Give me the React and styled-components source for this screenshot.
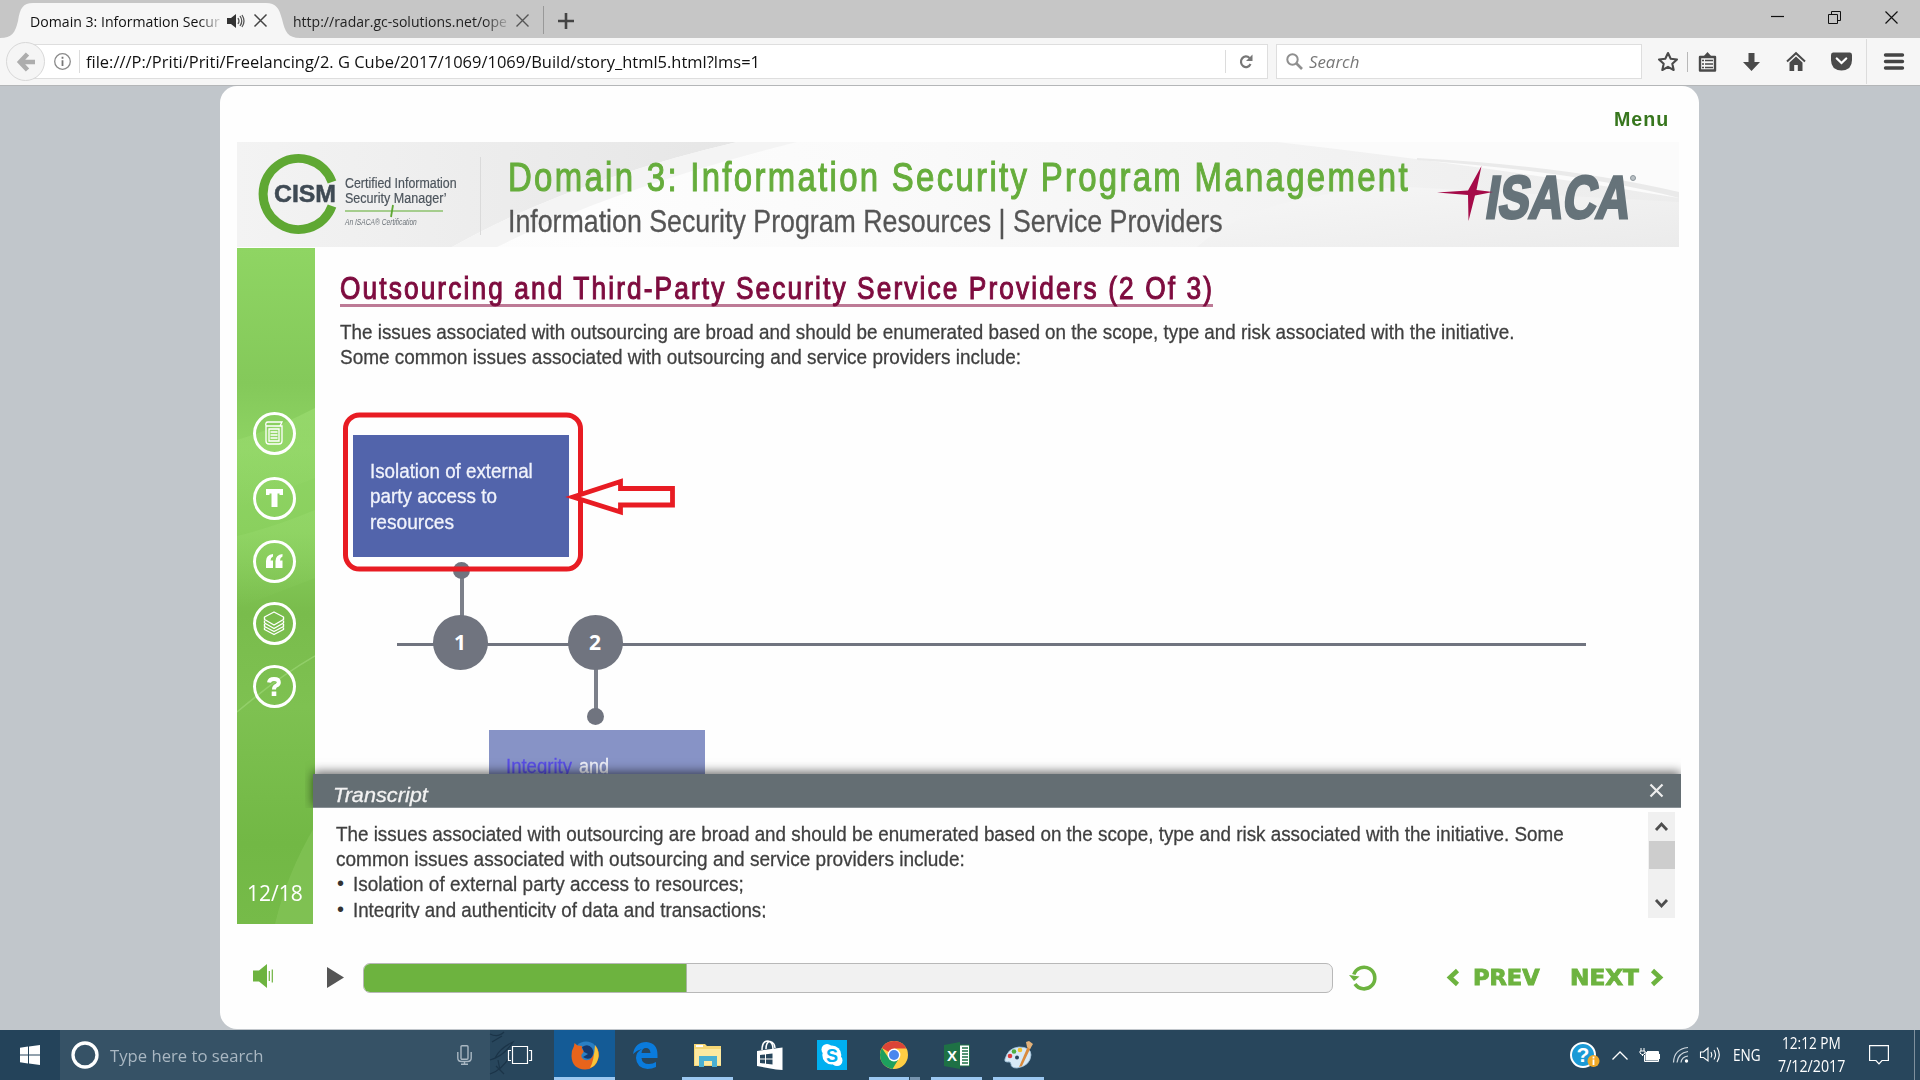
import React, { useLayoutEffect, useRef, useState } from "react";
import styled, { createGlobalStyle, css } from "styled-components";

const NARROW = '"Liberation Sans Narrow", "Liberation Sans", Arial, sans-serif';
const UI = '"Open Sans", "Noto Sans", sans-serif';
const GREEN = "#6db33f";

const GlobalStyle = createGlobalStyle`
  * { box-sizing: border-box; }
  html, body { margin: 0; padding: 0; }
  body { width: 1920px; height: 1080px; overflow: hidden; background: #c1c6cb; font-family: ${UI}; }
  svg { display: block; flex: none; overflow: visible; }
`;

/* ---------- text that is condensed or stretched to a set width ---------- */
const FitBox = styled.span`
  display: block;
  flex: none;
  width: ${(p) => p.$w}px;
  height: ${(p) => p.$lh}px;
  line-height: ${(p) => p.$lh}px;
  font-family: ${(p) => p.$font || NARROW};
  font-size: ${(p) => p.$size}px;
  font-weight: ${(p) => p.$weight || 400};
  font-style: ${(p) => (p.$italic ? "italic" : "normal")};
  letter-spacing: ${(p) => p.$track || 0}em;
  color: ${(p) => p.$color || "#444"};
  white-space: pre;
  ${(p) => p.$stroke && css`-webkit-text-stroke: ${p.$stroke}px ${p.$color};`}
`;
const FitInner = styled.span`
  display: inline-block;
  transform-origin: 0 50%;
`;
function Fit({ w, size, lh, font, weight, italic, track, color, stroke, className, children }) {
  const ref = useRef(null);
  const [scale, setScale] = useState(1);
  useLayoutEffect(() => {
    if (ref.current) setScale(w / ref.current.offsetWidth);
  }, [w, children]);
  return (
    <FitBox className={className} $w={w} $size={size} $lh={lh} $font={font} $weight={weight}
      $italic={italic} $track={track} $color={color} $stroke={stroke}>
      <FitInner ref={ref} style={{ transform: `scaleX(${scale})` }}>{children}</FitInner>
    </FitBox>
  );
}

const Screen = styled.div`
  width: 1920px;
  height: 1080px;
  display: flex;
  flex-direction: column;
  background: #c1c6cb;
  overflow: hidden;
`;

/* ---------- browser ---------- */
const TabStrip = styled.div`
  height: 38px;
  flex: none;
  display: flex;
  align-items: flex-end;
  background: #c6c6c6;
`;
const ActiveTab = styled.div`
  width: 300px;
  height: 35px;
  padding: 0 33px 0 30px;
  display: flex;
  align-items: center;
  background: #f6f6f6;
  clip-path: path("M0 35 C12 35 15 30 18 18 C20 5 23 0 33 0 H266 C276 0 279 5 282 16 C285 29 288 35 300 35 Z");
`;
const OtherTab = styled.div`
  width: 243px;
  height: 35px;
  margin-left: -7px;
  display: flex;
  align-items: center;
`;
const TabTitle = styled.div`
  width: ${(p) => p.$w}px;
  overflow: hidden;
  margin-right: ${(p) => p.$gap}px;
  mask-image: linear-gradient(to right, #000 89%, rgba(0, 0, 0, 0.15) 100%);
`;
const TabGap = styled.div`width: ${(p) => p.$w}px; flex: none;`;
const TabDivider = styled.div`
  width: 1px;
  height: 28px;
  margin: 0 14px 4px 7px;
  background: #999;
`;
const NewTab = styled.div`height: 35px; display: flex; align-items: center; flex: 1;`;
const WindowButtons = styled.div`
  height: 38px;
  display: flex;
  align-items: center;
  gap: 44px;
  padding: 0 22px 4px 0;
`;

const Toolbar = styled.div`
  height: 48px;
  flex: none;
  display: flex;
  align-items: center;
  padding-left: 6px;
  background: #f6f6f6;
  border-bottom: 1px solid #b4b6b8;
`;
const BackButton = styled.div`
  width: 39px;
  height: 39px;
  flex: none;
  display: flex;
  align-items: center;
  justify-content: center;
  border-radius: 50%;
  border: 1px solid #d8d8d8;
  background: #f5f5f5;
  z-index: 1;
`;
const UrlBar = styled.div`
  width: 1237px;
  height: 35px;
  margin-left: -14px;
  padding-left: 22px;
  display: flex;
  align-items: center;
  background: #fff;
  border: 1px solid #dedede;
`;
const UrlText = styled.div`flex: 1; padding-left: 6px;`;
const VLine = styled.div`
  width: 1px;
  height: ${(p) => p.$h}px;
  background: ${(p) => p.$c || "#dcdcdc"};
  margin: ${(p) => p.$m || 0};
`;
const ReloadSlot = styled.div`width: 41px; display: flex; justify-content: center; padding-right: 2px;`;
const SearchBar = styled.div`
  width: 366px;
  height: 35px;
  margin-left: 8px;
  padding-left: 9px;
  display: flex;
  align-items: center;
  gap: 6px;
  background: #fff;
  border: 1px solid #dedede;
`;
const ToolIcons = styled.div`
  display: flex;
  align-items: center;
  padding-left: 15px;
`;

/* ---------- course player ---------- */
const PageArea = styled.div`
  height: 944px;
  flex: none;
  padding-left: 220px;
`;
const Player = styled.div`
  width: 1479px;
  height: 943px;
  border-radius: 17px;
  background: #fefefe;
  display: flex;
  flex-direction: column;
`;
const MenuRow = styled.div`
  height: 56px;
  display: flex;
  justify-content: flex-end;
  padding: 19px 30px 0 0;
`;
const Banner = styled.header`
  position: relative;
  width: 1442px;
  height: 105px;
  margin-left: 17px;
  display: flex;
  flex: none;
  background: #f0f0f0;
`;
const BannerArt = styled.svg`
  position: absolute;
  inset: 0;
`;
const LogoBlock = styled.div`
  position: relative;
  display: flex;
  width: 243px;
  height: 105px;
`;
const Ring = styled.svg`
  position: absolute;
  left: 21px;
  top: 12px;
`;
const LogoWord = styled.div`padding: 38px 0 0 37px;`;
const LogoLines = styled.div`
  padding: 32.5px 0 0 9px;
  display: flex;
  flex-direction: column;
`;
const BannerRule = styled.div`
  position: relative;
  width: 1px;
  height: 78px;
  margin-top: 15px;
  background: #dadada;
`;
const Titles = styled.div`
  position: relative;
  padding: 10px 0 0 27px;
  width: 952px;
`;
const IsacaLogo = styled.svg`position: relative;`;

const Main = styled.div`
  margin: 1px 0 0 17px;
  height: 676px;
  flex: none;
  display: flex;
`;
const Sidebar = styled.nav`
  position: relative;
  width: 78px;
  height: 676px;
  display: flex;
  flex-direction: column;
  align-items: center;
  overflow: hidden;
`;
const SidebarArt = styled.svg`
  position: absolute;
  inset: 0;
`;
const SideButton = styled.div`
  position: relative;
  width: 43px;
  height: 43px;
  flex: none;
  margin: ${(p) => p.$mt}px 4px 0 0;
  display: flex;
  align-items: center;
  justify-content: center;
  border-radius: 50%;
  border: 3px solid #fff;
`;
const PageCount = styled.div`
  position: relative;
  margin: auto 0 16px -2px;
`;
const Stage = styled.section`
  width: 1366px;
  display: flex;
  flex-direction: column;
`;
const Slide = styled.div`
  height: 526px;
  display: flex;
  flex-direction: column;
  overflow: hidden;
  padding: 21px 0 0 0;
`;
const Heading = styled.h1`
  margin: 0 0 11.5px 25px;
  width: 873px;
  height: 38px;
  border-bottom: 3px solid #bd7a96;
`;
const Copy = styled.div`padding-left: 25px;`;
const Timeline = styled.div`
  position: relative;
  flex: 1;
`;
const Annotation = styled.svg`
  position: absolute;
  left: 0;
  top: 0;
`;
const Axis = styled.div`
  position: absolute;
  left: 82px;
  top: 274px;
  width: 1189px;
  height: 3px;
  background: #70747f;
`;
const Stem = styled.div`
  position: absolute;
  left: ${(p) => p.$x}px;
  top: ${(p) => p.$y}px;
  width: 4px;
  height: 44px;
  background: #7c808a;
`;
const Dot = styled.div`
  position: absolute;
  left: ${(p) => p.$x}px;
  top: ${(p) => p.$y}px;
  width: 17px;
  height: 17px;
  border-radius: 50%;
  background: #70747f;
`;
const Step = styled.div`
  position: absolute;
  left: ${(p) => p.$x}px;
  top: 246px;
  width: 55px;
  height: 55px;
  border-radius: 50%;
  background: #70747f;
  color: #fff;
  font: 700 21px/54px ${UI};
  text-align: center;
`;
const Card = styled.div`
  position: absolute;
  left: ${(p) => p.$x}px;
  top: ${(p) => p.$y}px;
  width: 216px;
  height: 122px;
  padding: 22.5px 17px;
  background: ${(p) => p.$bg};
`;
const CardLine = styled.div`display: flex; gap: 7px;`;

const TranscriptBar = styled.div`
  position: relative;
  height: 34px;
  flex: none;
  margin-left: -2px;
  width: 1368px;
  display: flex;
  justify-content: space-between;
  padding: 4px 18px 0 20px;
  background: #646e73;
  box-shadow: 0 -2px 10px rgba(0, 0, 0, 0.6);
  border-bottom: 1px solid #899196;
  clip-path: inset(-16px 0 0 -8px);
`;
const CloseSlot = styled.div`padding-top: 6px;`;
const TranscriptBody = styled.div`
  position: relative;
  width: 1368px;
  margin-left: -2px;
  height: 116px;
  display: flex;
  background: #fefefe;
`;
const TranscriptText = styled.div`
  height: 109.5px;
  width: 1335px;
  padding: 12.5px 0 0 23px;
  overflow: hidden;
`;
const Bullet = styled.div`display: flex; padding-left: 1px;`;
const BulletMark = styled.span`
  width: 16px;
  font: 20px/25.4px "Liberation Sans", sans-serif;
  color: #333;
`;
const Scrollbar = styled.div`
  width: 27px;
  height: 106px;
  margin-top: 4px;
  background: #f0f0f0;
  display: flex;
  flex-direction: column;
  align-items: center;
`;
const ScrollEnd = styled.div`
  height: 29px;
  display: flex;
  align-items: center;
`;
const Thumb = styled.div`
  width: 26px;
  height: 28px;
  margin-bottom: 20px;
  background: #cdcdcd;
`;

const Controls = styled.footer`
  height: 105px;
  padding: 2px 0 0 33px;
  display: flex;
  align-items: center;
`;
const VolumeSlot = styled.div`padding-bottom: 3px; margin-right: 54px;`;
const Progress = styled.div`
  width: 970px;
  height: 30px;
  margin: 0 17px 0 19px;
  border-radius: 7px;
  border: 1.5px solid #b8b8b8;
  background: #f1f1f1;
  overflow: hidden;
`;
const ProgressFill = styled.div`
  height: 100%;
  border-right: 1px solid #a9b5a2;
  background: ${GREEN};
`;
const NavButton = styled.div`
  display: flex;
  align-items: center;
  gap: ${(p) => p.$gap}px;
  margin-left: ${(p) => p.$ml}px;
`;

/* ---------- taskbar ---------- */
const Taskbar = styled.div`
  height: 50px;
  flex: none;
  display: flex;
  background: #28465c;
`;
const StartButton = styled.div`
  width: 60px;
  display: flex;
  align-items: center;
  justify-content: center;
  background: #24435a;
`;
const SearchBox = styled.div`
  width: 430px;
  padding: 0 18px 0 11px;
  display: flex;
  align-items: center;
  background: #365266;
`;
const SearchLabel = styled.div`flex: 1; padding-left: 11px; padding-top: 1px;`;
const TaskView = styled.div`
  width: 64px;
  display: flex;
  align-items: center;
`;
const AppButton = styled.div`
  width: ${(p) => p.$w}px;
  margin-left: ${(p) => p.$ml || 0}px;
  padding-left: ${(p) => p.$shift || 0}px;
  height: 50px;
  display: flex;
  align-items: center;
  justify-content: center;
  background: ${(p) => (p.$active ? "#145b96" : "transparent")};
  border-top: 3px solid transparent;
  border-bottom: 3px solid ${(p) => (p.$open ? "#9cc8f1" : "transparent")};
`;
const Half = styled.div`width: 10px; height: 3px; margin: 47px 0 0 1px; background: #7694ae;`;
const Tray = styled.div`
  margin-left: auto;
  display: flex;
  align-items: center;
`;
const Clock = styled.div`
  width: 68px;
  margin: 0 24px 0 16px;
  display: flex;
  flex-direction: column;
  align-items: center;
`;
const ShowDesktop = styled.div`
  width: 6px;
  height: 50px;
  margin-left: 25px;
  border-left: 1px solid #7f909d;
`;

const Cross = ({ s, c, w }) => (
  <svg width={s} height={s} viewBox="0 0 13 13"><path d="M.5 .5 12.5 12.5M12.5 .5 .5 12.5" stroke={c} strokeWidth={w} fill="none" /></svg>
);

function Browser() {
  return (
    <>
      <TabStrip>
        <ActiveTab>
          <TabTitle $w={190} $gap={7}><Fit w={190} size={15} lh={24} font={UI} color="#111">Domain 3: Information Secur</Fit></TabTitle>
          <svg width="18" height="14" viewBox="0 0 18 14"><path d="M0 4H4L9 0V14L4 10H0Z" fill="#333" /><path d="M11 4Q13 7 11 10M13 2Q16.500 7 13 12M15 1Q19 7 15 13" stroke="#555" strokeWidth="1.3" fill="none" /></svg>
          <TabGap $w={9} />
          <Cross s={13} c="#444" w={1.5} />
        </ActiveTab>
        <OtherTab>
          <TabTitle $w={215} $gap={8}><Fit w={214} size={15} lh={24} font={UI} color="#222">http://radar.gc-solutions.net/ope</Fit></TabTitle>
          <Cross s={13} c="#555" w={1.4} />
        </OtherTab>
        <TabDivider />
        <NewTab><svg width="16" height="16"><path d="M8 0V16M0 8H16" stroke="#444" strokeWidth="2.600" /></svg></NewTab>
        <WindowButtons>
          <svg width="13" height="13"><path d="M0 5.500H13" stroke="#111" strokeWidth="1.2" /></svg>
          <svg width="13" height="13"><path d="M.5 3.500H9.500V12.500H.5ZM3.500 3.500V.5H12.500V9.500H9.500" fill="none" stroke="#111" /></svg>
          <Cross s={13} c="#111" w={1.2} />
        </WindowButtons>
      </TabStrip>
      <Toolbar>
        <BackButton>
          <svg width="18" height="20" viewBox="0 0 18 20"><path d="M10.500 2 3 10 10.500 18M3.500 10H18" fill="none" stroke="#adadad" strokeWidth="4.600" /></svg>
        </BackButton>
        <UrlBar>
          <svg width="17" height="17"><circle cx="8.500" cy="8.500" r="7.800" fill="none" stroke="#8a8a8a" strokeWidth="1.300" /><path d="M8.500 7.200V13M8.500 3.800V5.800" stroke="#777" strokeWidth="1.800" /></svg>
          <VLine $h={23} $m="0 0 0 8px" />
          <UrlText><Fit w={674} size={16.5} lh={30} font={UI} color="#111">file:///P:/Priti/Priti/Freelancing/2. G Cube/2017/1069/1069/Build/story_html5.html?lms=1</Fit></UrlText>
          <VLine $h={23} />
          <ReloadSlot>
            <svg width="14" height="15" viewBox="0 0 14 15"><path d="M10.500 4A5 5.300 0 1 0 11.500 10" fill="none" stroke="#777" strokeWidth="2.200" /><path d="M13.500 .5V7H7Z" fill="#777" /></svg>
          </ReloadSlot>
        </UrlBar>
        <SearchBar>
          <svg width="17" height="17"><circle cx="6.500" cy="6.500" r="5.200" fill="none" stroke="#8f8f8f" strokeWidth="2" /><path d="M10.500 10.500 16 16" stroke="#8f8f8f" strokeWidth="2.600" /></svg>
          <Fit w={50} size={16.5} lh={30} font={UI} italic color="#777">Search</Fit>
        </SearchBar>
        <ToolIcons>
          <svg width="22" height="21" viewBox="0 0 22 21"><path d="M11 2 13.700 7.800 20 8.500 15.300 12.800 16.700 19 11 15.800 5.300 19 6.700 12.800 2 8.500 8.300 7.800Z" fill="none" stroke="#4a4a4a" strokeWidth="2.100" strokeLinejoin="round" /></svg>
          <VLine $h={20} $c="#b8b8b8" $m="0 10px 0 8px" />
          <svg width="19" height="20" viewBox="0 0 19 20"><path d="M2 5H17V18.500H2Z" fill="none" stroke="#4a4a4a" strokeWidth="2.400" strokeLinejoin="round" /><path d="M5 5 9.500 0 14 5Z" fill="#4a4a4a" /><path d="M4 8.500H6M7 8.500H15M4 12H6M7 12H15M4 15.500H6M7 15.500H15" stroke="#4a4a4a" strokeWidth="1.700" /></svg>
          <TabGap $w={26} />
          <svg width="17" height="18" viewBox="0 0 17 18"><path d="M5.500 0H11.500V9H17L8.500 18 0 9H5.500Z" fill="#4a4a4a" /></svg>
          <TabGap $w={26} />
          <svg width="20" height="19" viewBox="0 0 20 19"><path d="M1 9.500 10 1.200 19 9.500" fill="none" stroke="#4a4a4a" strokeWidth="2" /><path d="M3.500 10.500 10 4.500 16.500 10.500V19H11.800V13H8.200V19H3.500Z" fill="#4a4a4a" /></svg>
          <TabGap $w={25} />
          <svg width="21" height="19" viewBox="0 0 21 19"><path d="M2 .5H19Q21 .5 21 3V8Q21 18 10.500 18.500 0 18 0 8V3Q0 .5 2 .5Z" fill="#4a4a4a" /><path d="M5.800 6.500 10.500 11 15.200 6.500" fill="none" stroke="#fff" strokeWidth="2.300" strokeLinecap="round" /></svg>
          <VLine $h={45} $m="0 17px 0 14px" />
          <svg width="20" height="17"><path d="M1.500 2H18.500M1.500 8.500H18.500M1.500 15H18.500" stroke="#444" strokeWidth="3.400" strokeLinecap="round" /></svg>
        </ToolIcons>
      </Toolbar>
    </>
  );
}

function BannerView() {
  return (
    <Banner>
      <BannerArt width="1442" height="105" viewBox="0 0 1442 105">
        <defs>
          <linearGradient id="g1" x1="0" x2="1"><stop offset="0" stopColor="#f3f3f3" /><stop offset="1" stopColor="#e6e6e6" /></linearGradient>
          <linearGradient id="g2" x1="0" x2="1"><stop offset="0" stopColor="#fafafa" /><stop offset=".25" stopColor="#fdfdfd" /><stop offset=".45" stopColor="#fafafa" /><stop offset="1" stopColor="#ececec" /></linearGradient>
          <linearGradient id="g3" x1="0" x2="1" y1="0" y2="1"><stop offset="0" stopColor="#f7f7f7" /><stop offset="1" stopColor="#ebebeb" /></linearGradient>
        </defs>
        <rect width="1442" height="105" fill="url(#g2)" />
        <path d="M0 0H500Q330 40 215 105H0Z" fill="url(#g1)" />
        <path d="M215 105Q330 40 500 0H560Q380 45 260 105Z" fill="#f4f4f4" />
        <path d="M960 105Q1020 50 1170 45L1442 60V105Z" fill="url(#g3)" />
        <path d="M1040 0Q1250 24 1442 56V0Z" fill="#fbfbfb" />
        <path d="M1180 18Q1340 30 1442 56V50Q1330 24 1180 16Z" fill="#eaeaea" />
      </BannerArt>
      <LogoBlock>
        <Ring width="80" height="80" viewBox="0 0 80 80">
          <path d="M74 28A35.500 35.500 0 1 0 74 52" fill="none" stroke="#5fa833" strokeWidth="9" />
        </Ring>
        <LogoWord><Fit w={62} size={24} lh={28} weight={700} font='"Liberation Sans", sans-serif' color="#3f4a54" stroke={0.5}>CISM</Fit></LogoWord>
        <LogoLines>
          <Fit w={112} size={15.5} lh={15} color="#4c545c" stroke={0.2}>Certified Information</Fit>
          <Fit w={102} size={15.5} lh={15} color="#4c545c" stroke={0.2}>Security Manager’</Fit>
          <svg width="100" height="12"><path d="M0 6H98" stroke="#8cc26c" strokeWidth="1.500" /><path d="M48 0 46 12" stroke="#5fa833" strokeWidth="1.800" /></svg>
          <Fit w={72} size={8.5} lh={10} italic color="#6b7278">An ISACA® Certification</Fit>
        </LogoLines>
      </LogoBlock>
      <BannerRule />
      <Titles>
        <Fit w={902} size={41} lh={50} track={0.07} color="#66ad3c" stroke={1.1}>Domain 3: Information Security Program Management</Fit>
        <Fit w={715} size={31.5} lh={38} color="#555" stroke={0.3}>Information Security Program Resources | Service Providers</Fit>
      </Titles>
      <IsacaLogo width="205" height="105" viewBox="0 0 205 105">
        <g transform="translate(51 76) skewX(-9)">
          <text x="0" y="0" textLength="144" lengthAdjust="spacingAndGlyphs" fontFamily="Liberation Sans, sans-serif" fontWeight="700" fontSize="60" fill="#66737a" stroke="#66737a" strokeWidth="3">ISACA</text>
        </g>
        <path d="M4 50.500 35 48.500 48.500 24 43.500 48 60 50 42 53.500 35.500 79 35 53Z" fill="#a50b49" />
        <circle cx="200" cy="36" r="2.500" fill="#b9c0c4" stroke="#8a949a" />
      </IsacaLogo>
    </Banner>
  );
}

const body = { size: 20.5, lh: 25.4, color: "#3f3f3f", stroke: 0.3 };

function SlideView() {
  return (
    <Slide>
      <Heading><Fit w={874} size={32} lh={39} track={0.08} color="#7e0c3f" stroke={1.1}>Outsourcing and Third-Party Security Service Providers (2 Of 3)</Fit></Heading>
      <Copy>
        <Fit w={1174} {...body}>The issues associated with outsourcing are broad and should be enumerated based on the scope, type and risk associated with the initiative.</Fit>
        <Fit w={681} {...body}>Some common issues associated with outsourcing and service providers include:</Fit>
      </Copy>
      <Timeline>
        <Axis />
        <Stem $x={145} $y={204} />
        <Stem $x={279} $y={298} />
        <Dot $x={138} $y={193} />
        <Dot $x={272} $y={338.5} />
        <Step $x={117.5}>1</Step>
        <Step $x={252.5}>2</Step>
        <Card $x={38} $y={66} $bg="#5264ab">
          <Fit w={163} {...body} color="#f1f3fb">Isolation of external</Fit>
          <Fit w={127} {...body} color="#f1f3fb">party access to</Fit>
          <Fit w={84} {...body} color="#f1f3fb">resources</Fit>
        </Card>
        <Card $x={174} $y={361} $bg="#8793c6">
          <CardLine>
            <Fit w={66} {...body} color="#594ee6">Integrity</Fit>
            <Fit w={30} {...body} color="#f1f3fb">and</Fit>
          </CardLine>
        </Card>
        <Annotation width="400" height="220" viewBox="0 0 400 220">
          <rect x="30.500" y="46" width="235" height="154" rx="14" fill="none" stroke="#e81c23" strokeWidth="5" />
          <path d="M258 128 305.500 112.500V119.500H357.500V136H305.500V143Z" fill="#fefefe" stroke="#e81c23" strokeWidth="4.800" />
        </Annotation>
      </Timeline>
    </Slide>
  );
}

function Transcript() {
  return (
    <>
      <TranscriptBar>
        <Fit w={95} size={21} lh={34} italic color="#f2f2f2" stroke={0.3}>Transcript</Fit>
        <CloseSlot><Cross s={13} c="#eee" w={2.2} /></CloseSlot>
      </TranscriptBar>
      <TranscriptBody>
        <TranscriptText>
          <Fit w={1228} {...body}>The issues associated with outsourcing are broad and should be enumerated based on the scope, type and risk associated with the initiative. Some</Fit>
          <Fit w={629} {...body}>common issues associated with outsourcing and service providers include:</Fit>
          <Bullet><BulletMark>•</BulletMark><Fit w={391} {...body}>Isolation of external party access to resources;</Fit></Bullet>
          <Bullet><BulletMark>•</BulletMark><Fit w={413} {...body}>Integrity and authenticity of data and transactions;</Fit></Bullet>
        </TranscriptText>
        <Scrollbar>
          <ScrollEnd><svg width="13" height="9"><path d="M1 8 6.500 2 12 8" fill="none" stroke="#4d4d4d" strokeWidth="2.800" /></svg></ScrollEnd>
          <Thumb />
          <ScrollEnd><svg width="13" height="9"><path d="M1 1 6.500 7 12 1" fill="none" stroke="#4d4d4d" strokeWidth="2.800" /></svg></ScrollEnd>
        </Scrollbar>
      </TranscriptBody>
    </>
  );
}

function SidebarView() {
  return (
    <Sidebar>
      <SidebarArt width="78" height="676" viewBox="0 0 78 676">
        <defs>
          <linearGradient id="side" x1="0" x2="0" y1="0" y2="1">
            <stop offset="0" stopColor="#8fd563" /><stop offset=".2" stopColor="#84c95a" /><stop offset=".3" stopColor="#8fd464" />
            <stop offset=".42" stopColor="#8ad05e" /><stop offset=".54" stopColor="#79bc4c" /><stop offset=".68" stopColor="#7ec151" />
            <stop offset=".88" stopColor="#72b845" /><stop offset="1" stopColor="#76bb49" />
          </linearGradient>
          <linearGradient id="fade" x1="0" x2="0" y1="0" y2="1">
            <stop offset="0" stopColor="#9bdc70" stopOpacity=".7" /><stop offset="1" stopColor="#9bdc70" stopOpacity="0" />
          </linearGradient>
        </defs>
        <rect width="78" height="676" fill="url(#side)" />
        <path d="M0 192Q40 180 78 160V230L0 260Z" fill="url(#fade)" />
        <path d="M0 288Q40 278 78 262V330L0 360Z" fill="url(#fade)" opacity=".6" />
        <path d="M0 464Q40 430 78 408" fill="none" stroke="#a0d97a" strokeWidth="1.500" opacity=".6" />
        <path d="M78 578Q50 625 38 676H78Z" fill="#8cca5f" opacity=".45" />
      </SidebarArt>
      <SideButton $mt={163.5}>
        <svg width="20" height="24" viewBox="0 0 20 24" fill="none" stroke="#fff" strokeWidth="1.300"><path d="M2 5V20Q2 23 5 23H15Q18 23 18 20V5ZM2 5Q1 1 4 1H18L16 5" /><path d="M5 8H15V20H5ZM6.500 11H13.500M6.500 14H13.500M6.500 17H13.500" /></svg>
      </SideButton>
      <SideButton $mt={22}>
        <svg width="17" height="18" viewBox="0 0 17 18"><path d="M0 0H17V6H13.500V4.500H11.500V18H5.500V4.500H3.500V6H0Z" fill="#fff" /></svg>
      </SideButton>
      <SideButton $mt={20}>
        <svg width="17" height="14" viewBox="0 0 17 14"><path d="M7 0V2.500Q4.500 3.500 4.500 6.500H7V14H0V7Q0 1 7 0ZM16.500 0V2.500Q14 3.500 14 6.500H16.500V14H9.500V7Q9.500 1 16.500 0Z" fill="#fff" /></svg>
      </SideButton>
      <SideButton $mt={19}>
        <svg width="22" height="24" viewBox="0 0 22 24" fill="none" stroke="#fff" strokeWidth="1.400" strokeLinejoin="round"><path d="M11 1 20.500 6 V8.500L11 14 1.500 8.500V6Z" /><path d="M1.500 9.500V12L11 17.500 20.500 12V9.500M1.500 13V15.500L11 20.500 20.500 15.500V13M1.500 16.500V18.500L11 23.500 20.500 18.500V16.500" /></svg>
      </SideButton>
      <SideButton $mt={20}>
        <svg width="14" height="19" viewBox="0 0 14 19"><path d="M2 5.500Q2.500 2 7 2 11.800 2 11.800 5.300 11.800 7.500 9.500 8.500 7 9.500 7 12.500" fill="none" stroke="#fff" strokeWidth="4" /><path d="M4.700 14.500H9.300V19H4.700Z" fill="#fff" /></svg>
      </SideButton>
      <PageCount><Fit w={56} size={22.5} lh={30} font={UI} color="#fff">12/18</Fit></PageCount>
    </Sidebar>
  );
}

function ControlsView() {
  const done = 0.334;
  const black = { size: 21.5, lh: 28, weight: 700, font: '"DejaVu Sans", sans-serif', color: GREEN, stroke: 0.9 };
  return (
    <Controls>
      <VolumeSlot>
        <svg width="20" height="24" viewBox="0 0 20 24"><path d="M0 6.500H6L14 0V24L6 17.500H0Z" fill={GREEN} /><path d="M16.300 7V17M19.300 5.500V18.500" stroke={GREEN} strokeWidth="1.200" /></svg>
      </VolumeSlot>
      <svg width="17" height="21"><path d="M0 0 17 10.500 0 21Z" fill="#555" /></svg>
      <Progress><ProgressFill style={{ width: `${done * 100}%` }} /></Progress>
      <svg width="27" height="27" viewBox="0 0 27 27"><path d="M3.800 10.500A10.800 10.800 0 1 1 5 20" fill="none" stroke={GREEN} strokeWidth="3.600" /><path d="M-1 11 9.500 12.500 4 17Z" fill={GREEN} /></svg>
      <NavButton $gap={14} $ml={70}>
        <svg width="12" height="17"><path d="M10.500 1.500 3 8.500 10.500 15.500" fill="none" stroke={GREEN} strokeWidth="4.600" /></svg>
        <Fit w={67} {...black}>PREV</Fit>
      </NavButton>
      <NavButton $gap={12} $ml={30}>
        <Fit w={69} {...black}>NEXT</Fit>
        <svg width="12" height="17"><path d="M1.500 1.500 9 8.500 1.500 15.500" fill="none" stroke={GREEN} strokeWidth="4.600" /></svg>
      </NavButton>
    </Controls>
  );
}

function TaskbarView() {
  return (
    <Taskbar>
      <StartButton>
        <svg width="20" height="20" viewBox="0 0 20 20" fill="#fff"><path d="M0 2.800 8 1.600V9.500H0ZM9 1.500 20 0V9.500H9ZM0 10.500H8V18.400L0 17.200ZM9 10.500H20V20L9 18.500Z" /></svg>
      </StartButton>
      <SearchBox>
        <svg width="28" height="28"><circle cx="14" cy="14" r="12" fill="none" stroke="#fff" strokeWidth="3.300" /></svg>
        <SearchLabel><Fit w={153} size={17} lh={26} font={UI} color="#a9b7c2">Type here to search</Fit></SearchLabel>
        <svg width="15" height="20" viewBox="0 0 15 20" fill="none" stroke="#a9b7c2" strokeWidth="1.400"><rect x="4" y=".7" width="7" height="13.500" rx="1" /><path d="M.8 7V13Q.8 16.500 4.500 16.500H10.500Q14.200 16.500 14.200 13V7M7.500 16.500V19.300M4 19.300H11" /></svg>
      </SearchBox>
      <TaskView>
        <svg width="42" height="50" viewBox="0 0 42 50" fill="none"><path d="M0 4Q8 8 14 2M2 12 12 6M0 30Q14 26 23 12 10 18 5 28M0 44Q12 40 20 26M6 36 14 44M8 30 10 40" stroke="#1b3448" strokeWidth="1.200" /><path d="M22.500 16.500H37.500V33.500H22.500ZM21 20.500H18.500V30.500H21M39 20.500H41.500V30.500H39" stroke="#fff" strokeWidth="1.200" /></svg>
      </TaskView>
      <AppButton $w={61} $active $open>
        <svg width="28" height="29" viewBox="0 0 28 29"><circle cx="15" cy="13" r="12.500" fill="#2a7fc4" /><path d="M25 5Q29 11 27.500 17 25 28 14 28.500 1 28 .5 15 .5 9 3 5L3.500 2 6.500 4.500 11 5Q10 8 13 10L11.500 12.500Q9.500 14 11 17 14 20.500 19 18.500 24 14 25 5Z" fill="#e8641b" /><path d="M24 4Q29 11 27 18 25 25 19 27 23 20 24 4Z" fill="#f7c53b" /><path d="M11 6Q17 2 21 7 24 12 20 17 16 19 12 16L17 13 13 11Z" fill="#15386e" /></svg>
      </AppButton>
      <AppButton $w={51} $ml={5}>
        <svg width="25" height="27" viewBox="0 0 25 27"><path d="M0 12Q2 0 13.500 0 24.500 1 24.500 13V16H8.500Q9 22 16 22 20 22 23 20V25Q19 27 14.500 27 3.500 26 3 16 3 10 9 7 4 8 0 12ZM8.500 11H17.500Q17 6 13 6 9 6 8.500 11Z" fillRule="evenodd" fill="#0a7bdc" /></svg>
      </AppButton>
      <AppButton $w={51} $ml={11} $open>
        <svg width="28" height="25" viewBox="0 0 28 25"><path d="M0 1H11L13 3H27V23H0Z" fill="#f6d775" /><path d="M2 2H9V4H2Z" fill="#fff" /><path d="M1 6H27V22H1Z" fill="#fde9a0" /><path d="M5 24V13H23V24H18V18H10V24Z" fill="#4ab0d2" /></svg>
      </AppButton>
      <AppButton $w={51} $ml={11}>
        <svg width="26" height="30" viewBox="0 0 26 30"><path d="M0 11 25.500 7.500V30L19 29.500 0 26Z" fill="#fff" /><path d="M5 10Q5 1 11 1 16 2 16 9M9 9Q9 2 13 1.500 18 3 18 8" fill="none" stroke="#fff" strokeWidth="1.500" /><path d="M3 15 8 14.500V18.500H3ZM9 14.300 15.500 13.500V18.500H9ZM3 19.500H8V23.500L3 23ZM9 19.500H15.500V24.500L9 23.700Z" fill="#28465c" /></svg>
      </AppButton>
      <AppButton $w={51} $ml={11}>
        <svg width="30" height="30" viewBox="0 0 30 30"><rect width="30" height="30" fill="#00aff0" /><circle cx="14.800" cy="15" r="9.500" fill="#fff" /><circle cx="10" cy="9.500" r="5.500" fill="#fff" /><circle cx="20" cy="20.500" r="5.500" fill="#fff" /><text x="15" y="21.500" textAnchor="middle" fontFamily="Liberation Sans, sans-serif" fontWeight="700" fontSize="18" fill="#00aff0">S</text></svg>
      </AppButton>
      <AppButton $w={40} $ml={12} $open $shift={10}>
        <svg width="28" height="28" viewBox="0 0 28 28"><circle cx="14" cy="14" r="14" fill="#ffce44" /><path d="M14 14 1.900 7A14 14 0 0 1 26.500 7.500H14Z" fill="#db4437" /><path d="M1.900 7A14 14 0 0 0 12.500 28L18 19 14 14 8 16Z" fill="#1da05e" /><circle cx="14" cy="14" r="6.400" fill="#fff" /><circle cx="14" cy="14" r="5" fill="#4a87ee" /></svg>
      </AppButton>
      <Half />
      <AppButton $w={51} $ml={11} $open>
        <svg width="26" height="27" viewBox="0 0 26 27"><path d="M13 3H25.500V24H13Z" fill="#fff" stroke="#1e7145" /><path d="M18 6H24M18 9H24M18 12H24M18 15H24M18 18H24M18 21H24" stroke="#1e7145" strokeWidth="1.500" /><path d="M0 3 16 0V27L0 24Z" fill="#1e7145" /><text x="8" y="19" textAnchor="middle" fontFamily="Liberation Sans, sans-serif" fontWeight="700" fontSize="15" fill="#fff">X</text></svg>
      </AppButton>
      <AppButton $w={51} $ml={11} $open>
        <svg width="30" height="28" viewBox="0 0 30 28"><path d="M1 18Q4 7 15 6 27 6 27 14 26 25 13 27 7 27 7 23 7 20 3 21 0 21 1 18Z" fill="#d7e9f6" stroke="#9fc0d8" strokeWidth=".8" /><circle cx="6" cy="15" r="2.300" fill="#dc3d3d" /><circle cx="10" cy="10.500" r="2.300" fill="#4fae40" /><circle cx="16" cy="9" r="2.300" fill="#f0c02e" /><circle cx="13" cy="16.500" r="2" fill="#28465c" /><path d="M24 5 15 26 18 25 27 6Z" fill="#d98a3c" /><path d="M22 1 25 0 29 3 26 8 23 6Z" fill="#e3b27a" /></svg>
      </AppButton>
      <Tray>
        <svg width="30" height="28" viewBox="0 0 30 28"><circle cx="13" cy="14" r="12" fill="#1b9ad6" stroke="#fff" strokeWidth="2" /><text x="13" y="21" textAnchor="middle" fontFamily="Liberation Sans, sans-serif" fontWeight="700" fontSize="21" fill="#fff">?</text><circle cx="23.500" cy="20" r="6" fill="#f0a928" /><path d="M23.500 18.500V24M23.500 15.500V17.500" stroke="#fff" strokeWidth="1.800" /></svg>
        <TabGap $w={12} />
        <svg width="16" height="9"><path d="M.5 8.500 8 1 15.500 8.500" fill="none" stroke="#fff" strokeWidth="1.300" /></svg>
        <TabGap $w={12} />
        <svg width="20" height="14" viewBox="0 0 20 14"><path d="M5.500 4H18.500V12.500H5.500Z" fill="#fff" /><path d="M4.500 7V13.500H18.500V3.500H7M19.500 6V11M1 0V3M4 0V3M0 3H5V5Q4 6.500 2.500 6.500 1 6.500 0 5ZM2.500 6V8" fill="none" stroke="#fff" /></svg>
        <TabGap $w={13} />
        <svg width="16" height="16" fill="none"><path d="M.5 15.500Q1 2 15 .5M4 15.500Q5 6 15 4.500M8 15.500Q8.500 10 15 9" stroke="#cfd8df" strokeWidth="1.200" /><circle cx="13.500" cy="14" r="1.700" fill="#fff" /></svg>
        <TabGap $w={11} />
        <svg width="20" height="18" viewBox="0 0 20 18" fill="none" stroke="#fff" strokeWidth="1.100"><path d="M.5 6H3.500L8 2V15L3.500 11.500H.5ZM11 6Q12.500 8.700 11 11.500M14 4Q17 8.700 14 13.500M17 1.500Q21.500 8.700 17 16" /></svg>
        <TabGap $w={13} />
        <Fit w={28} size={15.5} lh={26} font={UI} color="#fff">ENG</Fit>
        <Clock>
          <Fit w={59} size={15.5} lh={23} font={UI} color="#fff">12:12 PM</Fit>
          <Fit w={67} size={15.5} lh={23} font={UI} color="#fff">7/12/2017</Fit>
        </Clock>
        <svg width="20" height="20"><path d="M.6 .6H19.400V15.500H13L10 18.800 7 15.500H.6Z" fill="none" stroke="#fff" strokeWidth="1.200" /></svg>
        <ShowDesktop />
      </Tray>
    </Taskbar>
  );
}

export default function App() {
  return (
    <Screen>
      <GlobalStyle />
      <Browser />
      <PageArea>
        <Player>
          <MenuRow><Fit w={55} size={20} lh={28} weight={700} track={0.05} font='"Liberation Sans", sans-serif' color="#37761d">Menu</Fit></MenuRow>
          <BannerView />
          <Main>
            <SidebarView />
            <Stage>
              <SlideView />
              <Transcript />
            </Stage>
          </Main>
          <ControlsView />
        </Player>
      </PageArea>
      <TaskbarView />
    </Screen>
  );
}
